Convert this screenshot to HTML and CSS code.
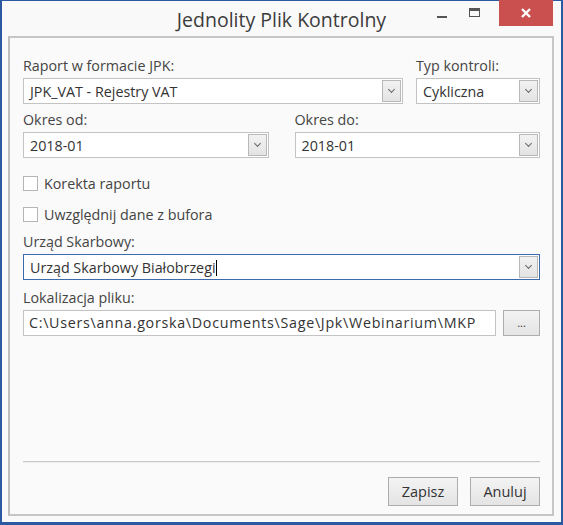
FILE: index.html
```html
<!DOCTYPE html>
<html lang="pl">
<head>
<meta charset="UTF-8">
<title>Jednolity Plik Kontrolny</title>
<link rel="stylesheet" href="styles.css">
</head>
<body>
<div class="window">
    <div class="titlebar">
        <div></div>
        <div class="title">Jednolity Plik Kontrolny</div>
        <div class="controls">
            <span class="ctl ctl-min"><span class="min-bar"></span></span>
            <span class="ctl ctl-max"><span class="max-box"></span></span>
            <span class="ctl ctl-close">
                <svg width="10" height="10" viewBox="0 0 10 10"><path d="M1 1 L9 9 M9 1 L1 9" stroke="#fff" stroke-width="2.4"/></svg>
            </span>
        </div>
    </div>

    <div class="panel">
        <div class="row row-top">
            <div class="field field-wide">
                <div class="label">Raport w formacie JPK:</div>
                <div class="combo"><span class="value">JPK_VAT - Rejestry VAT</span><span class="arrow"></span></div>
            </div>
            <div class="field field-type">
                <div class="label">Typ kontroli:</div>
                <div class="combo"><span class="value">Cykliczna</span><span class="arrow"></span></div>
            </div>
        </div>

        <div class="row row-period">
            <div class="field">
                <div class="label">Okres od:</div>
                <div class="combo"><span class="value">2018-01</span><span class="arrow"></span></div>
            </div>
            <div class="field">
                <div class="label">Okres do:</div>
                <div class="combo"><span class="value">2018-01</span><span class="arrow"></span></div>
            </div>
        </div>

        <label class="check check-first"><span class="box"></span>Korekta raportu</label>
        <label class="check"><span class="box"></span>Uwzględnij dane z bufora</label>

        <div class="field field-office">
            <div class="label">Urząd Skarbowy:</div>
            <div class="combo combo-focus"><span class="value">Urząd Skarbowy Białobrzegi<span class="caret"></span></span><span class="arrow"></span></div>
        </div>

        <div class="field field-path">
            <div class="label">Lokalizacja pliku:</div>
            <div class="path-row">
                <div class="textbox">C:\Users\anna.gorska\Documents\Sage\Jpk\Webinarium\MKP</div>
                <button class="btn btn-browse">...</button>
            </div>
        </div>

        <div class="spacer"></div>
        <div class="separator"></div>
        <div class="actions">
            <button class="btn btn-action">Zapisz</button>
            <button class="btn btn-action">Anuluj</button>
        </div>
    </div>
</div>
</body>
</html>
```

FILE: styles.css
```css
body {
    margin: 0;
    padding: 0;
    font-family: "Open Sans", "Noto Sans", sans-serif;
    background: #fafafa;
}

.window {
    box-sizing: border-box;
    width: 563px;
    height: 525px;
    border: 2px solid #2b5aa3;
    border-top-width: 1px;
    border-bottom-width: 3px;
    background: #f9f9f9;
    display: flex;
    flex-direction: column;
}

.titlebar {
    height: 35px;
    display: grid;
    grid-template-columns: 1fr auto 1fr;
    align-items: start;
}

.title {
    font-size: 19.5px;
    color: #3c3c3c;
    margin-top: 5px;
}

.controls {
    display: flex;
    justify-content: flex-end;
    padding-right: 8px;
    margin-top: -1px;
}

.ctl {
    display: flex;
    align-items: center;
    justify-content: center;
    height: 26px;
}

.ctl-min {
    width: 32px;
}

.min-bar {
    width: 10px;
    height: 2px;
    background: #555;
    margin-top: 8px;
}

.ctl-max {
    width: 32px;
    margin-right: 9px;
}

.max-box {
    box-sizing: border-box;
    width: 11px;
    height: 9px;
    border: 1px solid #555;
    border-top-width: 3px;
    margin-top: -1px;
}

.ctl-close {
    width: 54px;
    background: #c9504f;
}

.panel {
    flex: 1;
    margin: 0 7px 6px 6px;
    border: 2px solid #c6c6c6;
    border-left-color: #bdbdbd;
    background: #fafafa;
    padding: 19px 12px 8px 13px;
    display: flex;
    flex-direction: column;
    font-size: 14.3px;
    color: #444;
}

.row {
    display: flex;
}

.row-top {
    gap: 13px;
}

.row-period {
    gap: 26px;
    margin-top: 7px;
}

.field {
    display: flex;
    flex-direction: column;
    flex: 1;
}

.field-type {
    flex: 0 0 124px;
}

.label {
    line-height: 18px;
    margin-bottom: 3px;
    color: #454545;
}

.combo {
    box-sizing: border-box;
    height: 26px;
    border: 1px solid #c3c3c3;
    background: #fff;
    display: flex;
    align-items: center;
    padding: 1px;
}

.combo .value {
    flex: 1;
    padding-left: 5px;
    color: #333;
    white-space: nowrap;
}

.combo-focus {
    border-color: #3d6aa8;
}

.caret {
    display: inline-block;
    width: 1px;
    height: 16px;
    background: #000;
    vertical-align: -3px;
}

.arrow {
    box-sizing: border-box;
    width: 19px;
    height: 22px;
    border: 1px solid #b8b8b8;
    background: linear-gradient(#f2f2f2, #e3e3e3);
    position: relative;
}

.arrow::after {
    content: "";
    position: absolute;
    left: 6px;
    top: 6px;
    width: 4px;
    height: 4px;
    border-right: 1.5px solid #666;
    border-bottom: 1.5px solid #666;
    transform: rotate(45deg);
}

.check {
    display: flex;
    align-items: center;
    height: 22px;
    color: #444;
}

.check-first {
    margin-top: 14px;
    margin-bottom: 9px;
}

.box {
    box-sizing: border-box;
    width: 15px;
    height: 15px;
    border: 1px solid #b5b5b5;
    background: #fff;
    margin-right: 6px;
}

.field-office {
    margin-top: 8px;
    flex: 0 0 auto;
}

.field-path {
    margin-top: 9px;
    flex: 0 0 auto;
}

.path-row {
    display: flex;
    gap: 7px;
}

.textbox {
    box-sizing: border-box;
    flex: 1;
    height: 26px;
    border: 1px solid #c3c3c3;
    background: #fff;
    padding-left: 5px;
    line-height: 24px;
    color: #333;
    letter-spacing: 0.7px;
    white-space: nowrap;
    overflow: hidden;
}

.btn {
    box-sizing: border-box;
    border: 1px solid #adadad;
    background: linear-gradient(#f3f3f3, #e4e4e4);
    font-family: inherit;
    color: #333;
    padding: 0;
    cursor: pointer;
}

.btn-browse {
    width: 37px;
    height: 26px;
    font-size: 11px;
    line-height: 20px;
}

.spacer {
    flex: 1;
}

.separator {
    height: 1px;
    background: #c9c9c9;
    border-bottom: 1px solid #eee;
    margin-bottom: 14px;
}

.actions {
    display: flex;
    justify-content: flex-end;
    gap: 12px;
}

.btn-action {
    width: 70px;
    height: 29px;
    font-size: 14.5px;
}
```
